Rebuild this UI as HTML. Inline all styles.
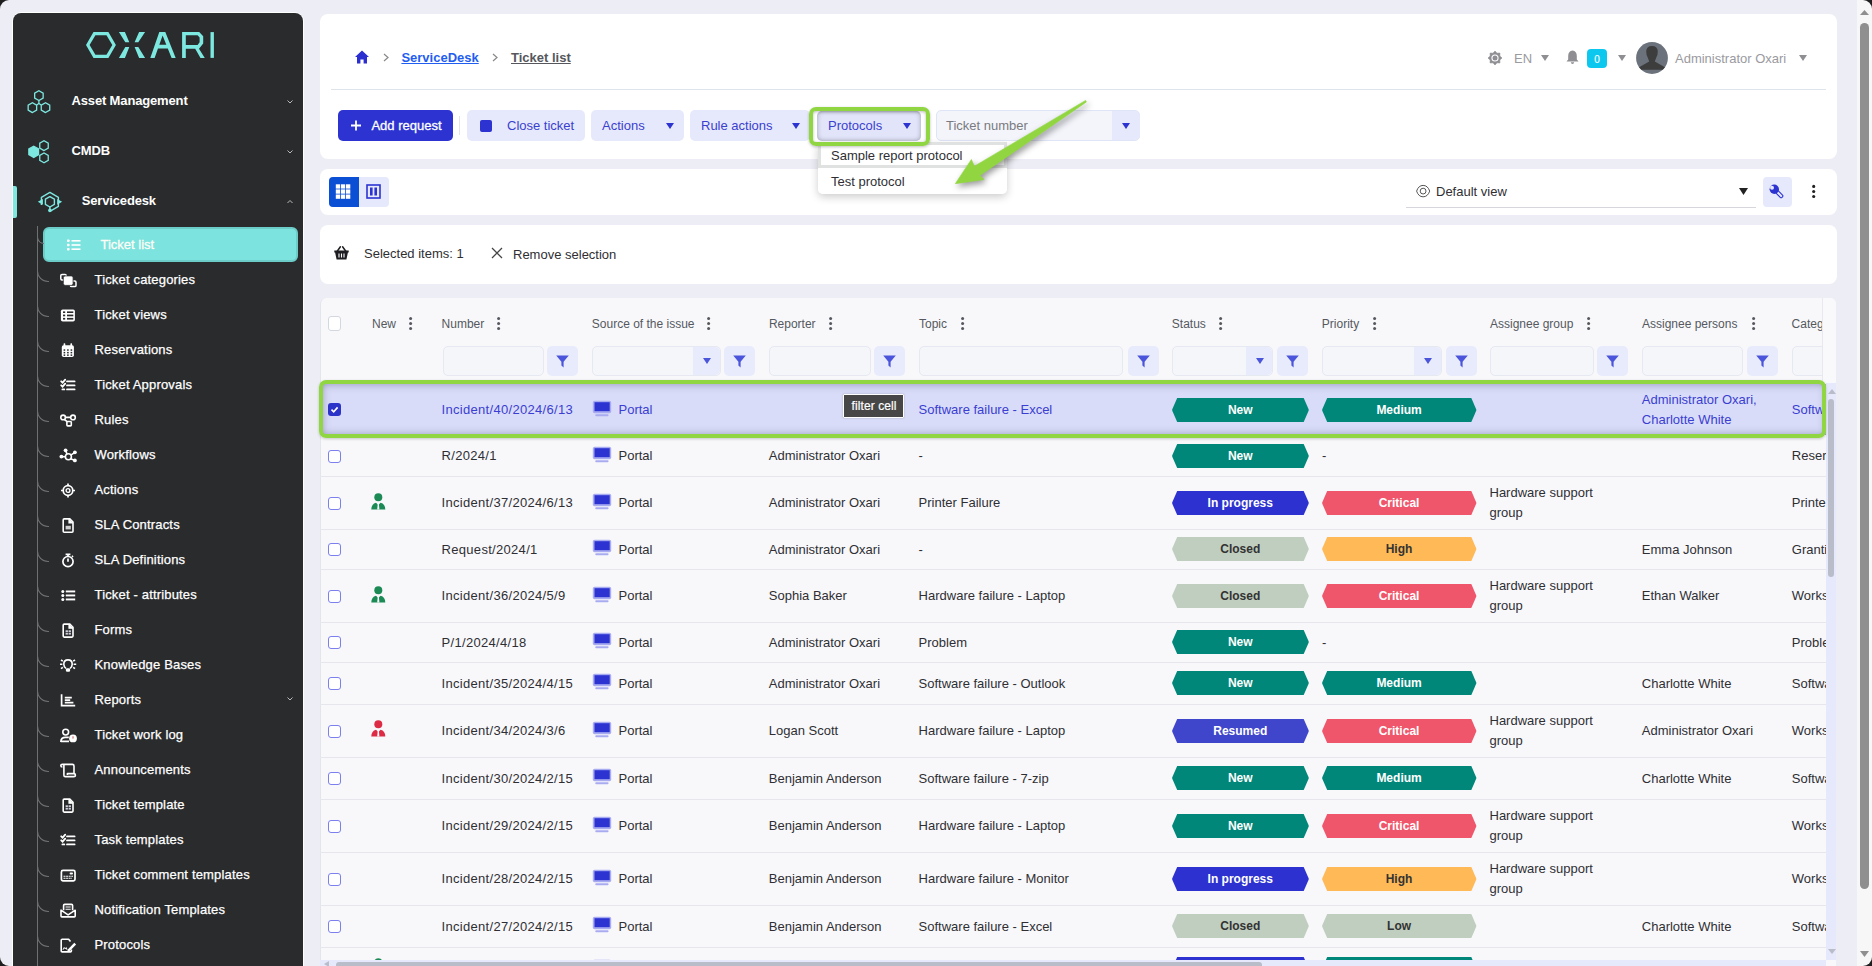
<!DOCTYPE html><html><head><meta charset="utf-8"><style>
*{box-sizing:border-box;margin:0;padding:0}
html,body{width:1872px;height:966px;overflow:hidden;background:#ededf5;font-family:"Liberation Sans",sans-serif;font-size:13px;color:#2f2f33}
.abs{position:absolute}
.t{position:absolute;white-space:nowrap;line-height:1}
svg{position:absolute;overflow:visible}
</style></head><body><div style="position:relative;width:1872px;height:966px;overflow:hidden"><div class="abs" style="left:13px;top:13px;width:290px;height:1000px;background:#2a2b2d;border-radius:8px;box-shadow:0 0 0 1px rgba(255,255,255,.9)"></div>
<svg style="left:0px;top:0px;" width="300" height="70" viewBox="0 0 300 70"><g fill="#7de8e0">
<path fill-rule="evenodd" d="M86 45 L93.5 32.1 L108.4 32.1 L115.9 45 L108.4 57.9 L93.5 57.9 Z M89.6 45 L95.4 35.3 L106.5 35.3 L112.3 45 L106.5 54.7 L95.4 54.7 Z"/>
<path d="M118.9 32.1 L124.9 32.1 L129.3 42.2 L125.3 42.2 Z M125.3 46.9 L129.3 46.9 L124.9 57.9 L118.9 57.9 Z"/>
<path d="M139.1 32.1 L145.1 32.1 L138.3 42.2 L134.6 42.2 Z M134.6 46.9 L138.3 46.9 L145.1 57.9 L139.1 57.9 Z"/>
<path d="M150.3 57.9 L159.3 32.1 L165.3 32.1 L175.7 57.9 L171.6 57.9 L162.6 35.6 L154.6 57.9 Z M156.6 44.8 H169.6 V48.6 H156.6 Z"/>
<path fill-rule="evenodd" d="M182.1 32.1 H199.2 L203.2 36.2 V43.6 L199 48.8 L204.8 57.9 H200.5 L195.2 48.8 H185.8 V57.9 H182.1 Z M185.8 35.3 H197.6 L199.6 37.6 V42.3 L197.6 45.1 H185.8 Z"/>
<rect x="210.5" y="32.1" width="3.4" height="25.8"/>
</g></svg>
<svg style="left:26px;top:89px;" width="26" height="26" viewBox="0 0 26 26"><g fill="none" stroke="#7de8e0" stroke-width="1.3">
<polygon points="17.80,6.60 15.35,10.84 10.45,10.84 8.00,6.60 10.45,2.36 15.35,2.36" transform="rotate(90 12.9 6.6)"/>
<polygon points="11.30,18.70 8.85,22.94 3.95,22.94 1.50,18.70 3.95,14.46 8.85,14.46" transform="rotate(90 6.4 18.7)"/>
<polygon points="24.40,18.70 21.95,22.94 17.05,22.94 14.60,18.70 17.05,14.46 21.95,14.46" transform="rotate(90 19.5 18.7)"/>
<path d="M12.9 11.5 V14.5 M12.9 14.5 L10.6 16 M12.9 14.5 L15.2 16"/>
</g></svg>
<div class="t" style="left:71.5px;top:94.20px;font-size:13px;color:#ffffff;font-weight:700;letter-spacing:-0.15px">Asset Management</div>
<svg style="left:286px;top:99px;" width="8" height="6" viewBox="0 0 8 6"><path d="M1.5 1.5 L4 4 L6.5 1.5" fill="none" stroke="#bbb" stroke-width="1"/></svg>
<svg style="left:27px;top:139px;" width="26" height="26" viewBox="0 0 26 26"><g stroke="#7de8e0" stroke-width="1.3">
<polygon fill="#7de8e0" points="12.30,12.80 9.50,17.65 3.90,17.65 1.10,12.80 3.90,7.95 9.50,7.95" transform="rotate(90 6.7 12.8)"/>
<polygon fill="none" points="21.90,6.70 19.45,10.94 14.55,10.94 12.10,6.70 14.55,2.46 19.45,2.46" transform="rotate(90 17 6.7)"/>
<polygon fill="none" points="21.90,18.90 19.45,23.14 14.55,23.14 12.10,18.90 14.55,14.66 19.45,14.66" transform="rotate(90 17 18.9)"/>
</g></svg>
<div class="t" style="left:71.5px;top:144.30px;font-size:13px;color:#ffffff;font-weight:700;letter-spacing:-0.15px">CMDB</div>
<svg style="left:286px;top:149px;" width="8" height="6" viewBox="0 0 8 6"><path d="M1.5 1.5 L4 4 L6.5 1.5" fill="none" stroke="#bbb" stroke-width="1"/></svg>
<div class="abs" style="left:13px;top:186px;width:4px;height:32px;background:#7de8e0;border-radius:0 2px 2px 0"></div>
<svg style="left:37px;top:191px;" width="26" height="22" viewBox="0 0 26 22"><g fill="none" stroke="#7de8e0" stroke-width="1.4" stroke-linejoin="round"><path d="M4.4 14 V6.3 L12.9 1.4 L21.4 6.3 V15.4 L12.9 20.3"/><polygon points="12.9,5.6 17.4,8.2 17.4,13.4 12.9,16 8.4,13.4 8.4,8.2"/><path d="M12.9 16 V19"/></g><path d="M0.8 10.8 L5.9 8.1 V13.7 Z M25.1 10.8 L20.2 8.1 V13.7 Z" fill="#7de8e0"/><circle cx="12.9" cy="19.4" r="1.8" fill="#7de8e0"/></svg>
<div class="t" style="left:81.7px;top:194.00px;font-size:13px;color:#ffffff;font-weight:700;letter-spacing:-0.15px">Servicedesk</div>
<svg style="left:286px;top:199px;" width="8" height="6" viewBox="0 0 8 6"><path d="M1.5 4 L4 1.5 L6.5 4" fill="none" stroke="#bbb" stroke-width="1"/></svg>
<div class="abs" style="left:37px;top:227px;width:1px;height:760px;background:#6f7073"></div>
<div class="abs" style="left:43px;top:227px;width:255px;height:35px;background:#7de3de;border:2px solid #6ccdc8;border-radius:6px"></div>
<div class="abs" style="left:37px;top:226px;width:7px;height:18px;border-left:1px solid #6f7073;border-bottom:1px solid #6f7073;border-bottom-left-radius:10px"></div>
<svg style="left:67px;top:239px;" width="14" height="12" viewBox="0 0 14 12"><g fill="#fff"><rect x="0" y="0.5" width="2.6" height="2.6" rx="0.8"/><rect x="0" y="4.7" width="2.6" height="2.6" rx="0.8"/><rect x="0" y="8.9" width="2.6" height="2.6" rx="0.8"/><rect x="4.5" y="1" width="9" height="1.6"/><rect x="4.5" y="5.2" width="9" height="1.6"/><rect x="4.5" y="9.4" width="9" height="1.6"/></g></svg>
<div class="t" style="left:100.5px;top:237.80px;font-size:13px;color:#fdfdf6;font-weight:400;-webkit-text-stroke:0.3px #fdfdf6">Ticket list</div>
<div class="abs" style="left:37px;top:269.5px;width:12px;height:12.5px;border-left:1px solid #6f7073;border-bottom:1px solid #6f7073;border-bottom-left-radius:11px"></div>
<svg style="left:60px;top:271.5px;" width="17" height="17" viewBox="0 0 17 17"><rect x="0.8" y="2.4" width="5.4" height="5.6" rx="1.2" fill="none" stroke="#ffffff" stroke-width="1.5"/><rect x="10.4" y="9" width="5.6" height="5.6" rx="1.2" fill="none" stroke="#ffffff" stroke-width="1.5"/><rect x="3.3" y="3.9" width="9.8" height="9.5" rx="1.8" fill="#ffffff" stroke="#2a2b2d" stroke-width="0.8"/></svg>
<div class="t" style="left:94.5px;top:272.70px;font-size:13px;color:#ffffff;font-weight:400;-webkit-text-stroke:0.25px #fff;letter-spacing:0.17px">Ticket categories</div>
<div class="abs" style="left:37px;top:304.5px;width:12px;height:12.5px;border-left:1px solid #6f7073;border-bottom:1px solid #6f7073;border-bottom-left-radius:11px"></div>
<svg style="left:60px;top:306.5px;" width="17" height="17" viewBox="0 0 17 17"><rect x="0.9" y="2.5" width="14" height="12.1" rx="1.8" fill="#ffffff"/><g fill="#2a2b2d"><rect x="3" y="4.4" width="2.2" height="1.6"/><rect x="3" y="7.6" width="2.2" height="1.7"/><rect x="3" y="10.9" width="2.2" height="1.7"/><rect x="7" y="4.4" width="6.3" height="1.6"/><rect x="7" y="7.6" width="6.3" height="1.7"/><rect x="7" y="10.9" width="6.3" height="1.7"/></g></svg>
<div class="t" style="left:94.5px;top:307.70px;font-size:13px;color:#ffffff;font-weight:400;-webkit-text-stroke:0.25px #fff;letter-spacing:0.17px">Ticket views</div>
<div class="abs" style="left:37px;top:339.5px;width:12px;height:12.5px;border-left:1px solid #6f7073;border-bottom:1px solid #6f7073;border-bottom-left-radius:11px"></div>
<svg style="left:60px;top:341.5px;" width="17" height="17" viewBox="0 0 17 17"><rect x="3.6" y="1.3" width="1.7" height="3" rx="0.6" fill="#ffffff"/><rect x="10.4" y="1.3" width="1.7" height="3" rx="0.6" fill="#ffffff"/><rect x="1.8" y="3.2" width="12.1" height="11.9" rx="1.8" fill="#ffffff"/><g fill="#2a2b2d"><rect x="3.6" y="7.3" width="1.6" height="1.5"/><rect x="7.1" y="7.3" width="1.6" height="1.5"/><rect x="10.6" y="7.3" width="1.6" height="1.5"/><rect x="3.6" y="9.9" width="1.6" height="1.5"/><rect x="7.1" y="9.9" width="1.6" height="1.5"/><rect x="10.6" y="9.9" width="1.6" height="1.5"/><rect x="3.6" y="12.4" width="1.6" height="1.5"/><rect x="7.1" y="12.4" width="1.6" height="1.5"/><rect x="10.6" y="12.4" width="1.6" height="1.5"/></g></svg>
<div class="t" style="left:94.5px;top:342.70px;font-size:13px;color:#ffffff;font-weight:400;-webkit-text-stroke:0.25px #fff;letter-spacing:0.17px">Reservations</div>
<div class="abs" style="left:37px;top:374.5px;width:12px;height:12.5px;border-left:1px solid #6f7073;border-bottom:1px solid #6f7073;border-bottom-left-radius:11px"></div>
<svg style="left:60px;top:376.5px;" width="17" height="17" viewBox="0 0 17 17"><g stroke="#ffffff" stroke-width="1.8" fill="none" stroke-linecap="round"><path d="M1.2 4.3 L2.6 5.6 L5.2 2.6"/><path d="M1.2 8.3 L2.6 9.6 L5.2 6.6"/><path d="M7 4.4 H14.6 M7 8.4 H14.6 M7 12.4 H14.6 M2.4 12.4 H4.3"/></g></svg>
<div class="t" style="left:94.5px;top:377.70px;font-size:13px;color:#ffffff;font-weight:400;-webkit-text-stroke:0.25px #fff;letter-spacing:0.17px">Ticket Approvals</div>
<div class="abs" style="left:37px;top:409.5px;width:12px;height:12.5px;border-left:1px solid #6f7073;border-bottom:1px solid #6f7073;border-bottom-left-radius:11px"></div>
<svg style="left:60px;top:411.5px;" width="17" height="17" viewBox="0 0 17 17"><g stroke="#ffffff" stroke-width="1.6" fill="none"><circle cx="3.1" cy="5.4" r="2.3"/><circle cx="13" cy="5.4" r="2.3"/><rect x="6.9" y="9.5" width="4.4" height="4.4" rx="0.8"/><path d="M5.4 5.4 H10.7 M4.3 7.4 L7.4 9.9"/></g></svg>
<div class="t" style="left:94.5px;top:412.70px;font-size:13px;color:#ffffff;font-weight:400;-webkit-text-stroke:0.25px #fff;letter-spacing:0.17px">Rules</div>
<div class="abs" style="left:37px;top:444.5px;width:12px;height:12.5px;border-left:1px solid #6f7073;border-bottom:1px solid #6f7073;border-bottom-left-radius:11px"></div>
<svg style="left:60px;top:446.5px;" width="17" height="17" viewBox="0 0 17 17"><g stroke="#ffffff" stroke-width="1.6" fill="none"><circle cx="8.4" cy="9.8" r="3"/><path d="M5.6 3.4 L7 7 M14.9 5.3 L10.8 8.1 M1.2 9.6 L5.4 9.8 M14.9 13.4 L10.6 11.8"/></g><g fill="#ffffff"><circle cx="5.6" cy="3.3" r="1.9"/><circle cx="14.9" cy="5.3" r="1.9"/><circle cx="1.4" cy="9.6" r="1.9"/><circle cx="14.9" cy="13.4" r="1.9"/></g></svg>
<div class="t" style="left:94.5px;top:447.70px;font-size:13px;color:#ffffff;font-weight:400;-webkit-text-stroke:0.25px #fff;letter-spacing:0.17px">Workflows</div>
<div class="abs" style="left:37px;top:479.5px;width:12px;height:12.5px;border-left:1px solid #6f7073;border-bottom:1px solid #6f7073;border-bottom-left-radius:11px"></div>
<svg style="left:60px;top:481.5px;" width="17" height="17" viewBox="0 0 17 17"><g stroke="#ffffff" fill="none"><circle cx="8" cy="8.5" r="4.8" stroke-width="1.7"/><circle cx="8" cy="8.5" r="1.9" stroke-width="1.4"/><path d="M8 1.5 V3.6 M8 13.4 V15.5 M1 8.5 H3.1 M12.9 8.5 H15" stroke-width="1.7"/></g></svg>
<div class="t" style="left:94.5px;top:482.70px;font-size:13px;color:#ffffff;font-weight:400;-webkit-text-stroke:0.25px #fff;letter-spacing:0.17px">Actions</div>
<div class="abs" style="left:37px;top:514.5px;width:12px;height:12.5px;border-left:1px solid #6f7073;border-bottom:1px solid #6f7073;border-bottom-left-radius:11px"></div>
<svg style="left:60px;top:516.5px;" width="17" height="17" viewBox="0 0 17 17"><path d="M4.2 1.9 H9.8 L13 5.1 V14.2 Q13 15.2 12 15.2 H4.2 Q3.2 15.2 3.2 14.2 V2.9 Q3.2 1.9 4.2 1.9 Z" fill="none" stroke="#ffffff" stroke-width="1.6"/><path d="M9 2 V6 H13" fill="#ffffff" stroke="#ffffff" stroke-width="1.2"/><rect x="5.6" y="8.8" width="5.2" height="3.6" fill="#cfcfcf"/></svg>
<div class="t" style="left:94.5px;top:517.70px;font-size:13px;color:#ffffff;font-weight:400;-webkit-text-stroke:0.25px #fff;letter-spacing:0.17px">SLA Contracts</div>
<div class="abs" style="left:37px;top:549.5px;width:12px;height:12.5px;border-left:1px solid #6f7073;border-bottom:1px solid #6f7073;border-bottom-left-radius:11px"></div>
<svg style="left:60px;top:551.5px;" width="17" height="17" viewBox="0 0 17 17"><g stroke="#ffffff" fill="none" stroke-width="1.7"><circle cx="8" cy="9.6" r="5.1"/><path d="M8 9.8 V6.6 M5.6 2.3 H10.4 M8 2.3 V4.4 M12 4.8 L13 3.8"/></g></svg>
<div class="t" style="left:94.5px;top:552.70px;font-size:13px;color:#ffffff;font-weight:400;-webkit-text-stroke:0.25px #fff;letter-spacing:0.17px">SLA Definitions</div>
<div class="abs" style="left:37px;top:584.5px;width:12px;height:12.5px;border-left:1px solid #6f7073;border-bottom:1px solid #6f7073;border-bottom-left-radius:11px"></div>
<svg style="left:60px;top:586.5px;" width="17" height="17" viewBox="0 0 17 17"><g fill="#ffffff"><circle cx="2.8" cy="4.4" r="1.5"/><circle cx="2.8" cy="8.4" r="1.5"/><circle cx="2.8" cy="12.4" r="1.5"/><rect x="5.8" y="3.5" width="9.4" height="1.9"/><rect x="5.8" y="7.5" width="9.4" height="1.9"/><rect x="5.8" y="11.5" width="9.4" height="1.9"/></g></svg>
<div class="t" style="left:94.5px;top:587.70px;font-size:13px;color:#ffffff;font-weight:400;-webkit-text-stroke:0.25px #fff;letter-spacing:0.17px">Ticket - attributes</div>
<div class="abs" style="left:37px;top:619.5px;width:12px;height:12.5px;border-left:1px solid #6f7073;border-bottom:1px solid #6f7073;border-bottom-left-radius:11px"></div>
<svg style="left:60px;top:621.5px;" width="17" height="17" viewBox="0 0 17 17"><path d="M4.2 2.1 H9.8 L13 5.3 V14.1 Q13 15.1 12 15.1 H4.2 Q3.2 15.1 3.2 14.1 V3.1 Q3.2 2.1 4.2 2.1 Z" fill="none" stroke="#ffffff" stroke-width="1.6"/><path d="M9 2.2 V6.2 H13" fill="#ffffff" stroke="#ffffff" stroke-width="1.2"/><g fill="#d0d0e0"><rect x="5.6" y="8.3" width="2.3" height="1.8"/><rect x="8.6" y="8.3" width="2.3" height="1.8"/><rect x="5.6" y="10.8" width="2.3" height="1.8"/><rect x="8.6" y="10.8" width="2.3" height="1.8"/></g></svg>
<div class="t" style="left:94.5px;top:622.70px;font-size:13px;color:#ffffff;font-weight:400;-webkit-text-stroke:0.25px #fff;letter-spacing:0.17px">Forms</div>
<div class="abs" style="left:37px;top:654.5px;width:12px;height:12.5px;border-left:1px solid #6f7073;border-bottom:1px solid #6f7073;border-bottom-left-radius:11px"></div>
<svg style="left:60px;top:656.5px;" width="17" height="17" viewBox="0 0 17 17"><g stroke="#ffffff" fill="none" stroke-width="1.6"><path d="M6 11.5 Q3.8 9.6 3.8 7.2 Q3.8 2.9 8 2.9 Q12.2 2.9 12.2 7.2 Q12.2 9.6 10 11.5"/><path d="M0 7.2 H2.4 M13.6 7.2 H16.2 M1 3 L2.8 4.2 M15 3 L13.2 4.2 M1 11.6 L2.8 10.3 M15 11.6 L13.2 10.3"/></g><rect x="5.9" y="11.2" width="4.2" height="3.6" rx="1.2" fill="#ffffff"/></svg>
<div class="t" style="left:94.5px;top:657.70px;font-size:13px;color:#ffffff;font-weight:400;-webkit-text-stroke:0.25px #fff;letter-spacing:0.17px">Knowledge Bases</div>
<div class="abs" style="left:37px;top:689.5px;width:12px;height:12.5px;border-left:1px solid #6f7073;border-bottom:1px solid #6f7073;border-bottom-left-radius:11px"></div>
<svg style="left:60px;top:691.5px;" width="17" height="17" viewBox="0 0 17 17"><g stroke="#ffffff" stroke-width="1.7" fill="none"><path d="M1.6 2.2 V13.7 H15.2"/><path d="M4.8 5.6 H11.8 M4.8 8.1 H10.2 M4.8 10.6 H13.4"/></g></svg>
<div class="t" style="left:94.5px;top:692.70px;font-size:13px;color:#ffffff;font-weight:400;-webkit-text-stroke:0.25px #fff;letter-spacing:0.17px">Reports</div>
<div class="abs" style="left:37px;top:724.5px;width:12px;height:12.5px;border-left:1px solid #6f7073;border-bottom:1px solid #6f7073;border-bottom-left-radius:11px"></div>
<svg style="left:60px;top:726.5px;" width="17" height="17" viewBox="0 0 17 17"><g stroke="#ffffff" stroke-width="1.6" fill="none"><circle cx="5.7" cy="5.1" r="2.9"/><path d="M0.8 15 Q0.8 10.4 5.6 10.4 H8.8 M0.8 14.4 H9"/></g><circle cx="13" cy="11.4" r="3.9" fill="#ffffff"/><path d="M13 9.3 V11.6" stroke="#b44" stroke-width="0.9"/></svg>
<div class="t" style="left:94.5px;top:727.70px;font-size:13px;color:#ffffff;font-weight:400;-webkit-text-stroke:0.25px #fff;letter-spacing:0.17px">Ticket work log</div>
<div class="abs" style="left:37px;top:759.5px;width:12px;height:12.5px;border-left:1px solid #6f7073;border-bottom:1px solid #6f7073;border-bottom-left-radius:11px"></div>
<svg style="left:60px;top:761.5px;" width="17" height="17" viewBox="0 0 17 17"><g stroke="#ffffff" stroke-width="1.6" fill="none" stroke-linejoin="round"><path d="M2.4 5 Q0.8 5 0.8 3.6 Q0.8 2.4 2.4 2.4 H12.4 Q14 2.4 14 4 V11.8"/><path d="M3.9 3 V13.2 Q3.9 14.6 5.3 14.6 H13.6 Q15.4 14.6 15.4 12.9 Q15.4 11.6 13.8 11.6 H7.4 V13"/></g></svg>
<div class="t" style="left:94.5px;top:762.70px;font-size:13px;color:#ffffff;font-weight:400;-webkit-text-stroke:0.25px #fff;letter-spacing:0.17px">Announcements</div>
<div class="abs" style="left:37px;top:794.5px;width:12px;height:12.5px;border-left:1px solid #6f7073;border-bottom:1px solid #6f7073;border-bottom-left-radius:11px"></div>
<svg style="left:60px;top:796.5px;" width="17" height="17" viewBox="0 0 17 17"><path d="M4.2 2.1 H9.8 L13 5.3 V14.1 Q13 15.1 12 15.1 H4.2 Q3.2 15.1 3.2 14.1 V3.1 Q3.2 2.1 4.2 2.1 Z" fill="none" stroke="#ffffff" stroke-width="1.6"/><path d="M9 2.2 V6.2 H13" fill="#ffffff" stroke="#ffffff" stroke-width="1.2"/><g fill="#d0d0e0"><rect x="5.6" y="8.3" width="2.3" height="1.8"/><rect x="8.6" y="8.3" width="2.3" height="1.8"/><rect x="5.6" y="10.8" width="2.3" height="1.8"/><rect x="8.6" y="10.8" width="2.3" height="1.8"/></g></svg>
<div class="t" style="left:94.5px;top:797.70px;font-size:13px;color:#ffffff;font-weight:400;-webkit-text-stroke:0.25px #fff;letter-spacing:0.17px">Ticket template</div>
<div class="abs" style="left:37px;top:829.5px;width:12px;height:12.5px;border-left:1px solid #6f7073;border-bottom:1px solid #6f7073;border-bottom-left-radius:11px"></div>
<svg style="left:60px;top:831.5px;" width="17" height="17" viewBox="0 0 17 17"><g stroke="#ffffff" stroke-width="1.8" fill="none" stroke-linecap="round"><path d="M1.2 4.3 L2.6 5.6 L5.2 2.6"/><path d="M1.2 8.3 L2.6 9.6 L5.2 6.6"/><path d="M7 4.4 H14.6 M7 8.4 H14.6 M7 12.4 H14.6 M2.4 12.4 H4.3"/></g></svg>
<div class="t" style="left:94.5px;top:832.70px;font-size:13px;color:#ffffff;font-weight:400;-webkit-text-stroke:0.25px #fff;letter-spacing:0.17px">Task templates</div>
<div class="abs" style="left:37px;top:864.5px;width:12px;height:12.5px;border-left:1px solid #6f7073;border-bottom:1px solid #6f7073;border-bottom-left-radius:11px"></div>
<svg style="left:60px;top:866.5px;" width="17" height="17" viewBox="0 0 17 17"><rect x="1.4" y="3.3" width="13.6" height="10.5" rx="1.6" fill="none" stroke="#ffffff" stroke-width="1.7"/><rect x="9.6" y="5.6" width="3.4" height="1.9" rx="0.9" fill="#ffffff"/><path d="M3.5 9.3 H13 M3.5 11.3 H12" stroke="#ffffff" stroke-width="1.1" stroke-dasharray="2 0.6"/></svg>
<div class="t" style="left:94.5px;top:867.70px;font-size:13px;color:#ffffff;font-weight:400;-webkit-text-stroke:0.25px #fff;letter-spacing:0.17px">Ticket comment templates</div>
<div class="abs" style="left:37px;top:899.5px;width:12px;height:12.5px;border-left:1px solid #6f7073;border-bottom:1px solid #6f7073;border-bottom-left-radius:11px"></div>
<svg style="left:60px;top:901.5px;" width="17" height="17" viewBox="0 0 17 17"><g stroke="#ffffff" stroke-width="1.6" fill="none" stroke-linejoin="round"><path d="M3.6 8.2 V3.5 Q3.6 2.4 4.7 2.4 H11.5 Q12.6 2.4 12.6 3.5 V8.2"/><path d="M1 8.2 V14 Q1 14.9 1.9 14.9 H14.3 Q15.2 14.9 15.2 14 V8.2 L8.1 12.9 Z"/></g><path d="M5.5 5 H10.7 M5.5 7.2 H10.7" stroke="#ffffff" stroke-width="1.1"/></svg>
<div class="t" style="left:94.5px;top:902.70px;font-size:13px;color:#ffffff;font-weight:400;-webkit-text-stroke:0.25px #fff;letter-spacing:0.17px">Notification Templates</div>
<div class="abs" style="left:37px;top:934.5px;width:12px;height:12.5px;border-left:1px solid #6f7073;border-bottom:1px solid #6f7073;border-bottom-left-radius:11px"></div>
<svg style="left:60px;top:936.5px;" width="17" height="17" viewBox="0 0 17 17"><g stroke="#ffffff" stroke-width="1.6" fill="none" stroke-linejoin="round"><path d="M10.5 4.6 L8.6 2.2 H2.2 Q1.2 2.2 1.2 3.2 V13.9 Q1.2 14.9 2.2 14.9 H10.4 Q11.4 14.9 11.4 13.9 V12.6"/></g><path d="M3 12.8 L4.2 10.5 L5 11.8 L6.3 10.6 L7 12.8" stroke="#ffffff" stroke-width="1" fill="none"/><path d="M7.6 12.8 L14.3 5.8 L16.1 7.6 L9.3 14.6 L7.3 14.9 Z" fill="#ffffff"/></svg>
<div class="t" style="left:94.5px;top:937.70px;font-size:13px;color:#ffffff;font-weight:400;-webkit-text-stroke:0.25px #fff;letter-spacing:0.17px">Protocols</div>
<svg style="left:286px;top:696px;" width="8" height="6" viewBox="0 0 8 6"><path d="M1.5 1.5 L4 4 L6.5 1.5" fill="none" stroke="#bbb" stroke-width="1"/></svg>
<div class="abs" style="left:320px;top:14px;width:1517px;height:145px;background:#fff;border-radius:8px"></div>
<div class="abs" style="left:320px;top:169px;width:1517px;height:46px;background:#fff;border-radius:8px"></div>
<div class="abs" style="left:320px;top:225px;width:1517px;height:59px;background:#fff;border-radius:8px"></div>
<svg style="left:355px;top:50px;" width="14" height="14" viewBox="0 0 14 14"><path d="M7 0.5 L14 7 L12 7 L12 13.5 L8.6 13.5 L8.6 9.5 L5.4 9.5 L5.4 13.5 L2 13.5 L2 7 L0 7 Z" fill="#2c2fd0"/></svg>
<svg style="left:383px;top:53px;" width="6" height="9" viewBox="0 0 6 9"><path d="M1 1 L5 4.5 L1 8" fill="none" stroke="#888" stroke-width="1.2"/></svg>
<div class="t" style="left:401.4px;top:51.10px;font-size:13px;color:#1f5ef0;font-weight:700;text-decoration:underline;text-underline-offset:1px">ServiceDesk</div>
<svg style="left:492px;top:53px;" width="6" height="9" viewBox="0 0 6 9"><path d="M1 1 L5 4.5 L1 8" fill="none" stroke="#888" stroke-width="1.2"/></svg>
<div class="t" style="left:511px;top:51.10px;font-size:13px;color:#55575c;font-weight:700;text-decoration:underline;text-underline-offset:1px">Ticket list</div>
<div class="abs" style="left:331px;top:89px;width:1495px;height:1px;background:#dfe3ea"></div>
<svg style="left:1487.5px;top:50.5px;" width="14" height="14" viewBox="0 0 14 14"><polygon points="7.00,0.00 8.99,2.20 11.95,2.05 11.80,5.01 14.00,7.00 11.80,8.99 11.95,11.95 8.99,11.80 7.00,14.00 5.01,11.80 2.05,11.95 2.20,8.99 0.00,7.00 2.20,5.01 2.05,2.05 5.01,2.20" fill="#8e8e93" stroke="#8e8e93" stroke-width="0.6" stroke-linejoin="round"/><circle cx="7" cy="7" r="3.6" fill="#fff"/><circle cx="7" cy="7" r="2.5" fill="#8e8e93"/></svg>
<div class="t" style="left:1514px;top:51.60px;font-size:13px;color:#9a9aa0;font-weight:400;">EN</div>
<svg style="left:1541px;top:55px;" width="8" height="6" viewBox="0 0 8 6"><path d="M0 0 H8 L4 6 Z" fill="#8e8e93"/></svg>
<svg style="left:1565.5px;top:50px;" width="13" height="14" viewBox="0 0 13 14"><path d="M6.5 0.5 Q10.8 1 10.8 6 L10.8 9.5 L12.5 11.5 L0.5 11.5 L2.2 9.5 L2.2 6 Q2.2 1 6.5 0.5 Z M4.8 12.3 H8.2 Q8 14 6.5 14 Q5 14 4.8 12.3Z" fill="#8e8e93"/></svg>
<div class="abs" style="left:1587px;top:49px;width:20px;height:19px;background:#0dc8ee;border-radius:4px"></div>
<div class="t" style="left:1594.3px;top:54.73px;font-size:10px;color:#fff;font-weight:400;-webkit-text-stroke:0.15px #fff">0</div>
<svg style="left:1618px;top:55px;" width="8" height="6" viewBox="0 0 8 6"><path d="M0 0 H8 L4 6 Z" fill="#8e8e93"/></svg>
<svg style="left:1636px;top:42px;" width="32" height="32" viewBox="0 0 32 32"><defs><clipPath id="av"><circle cx="16" cy="16" r="15.9"/></clipPath></defs><circle cx="16" cy="16" r="15.9" fill="#6b727b"/><g clip-path="url(#av)" fill="#3d3d3e"><path d="M10.2 9.5 Q10.2 3.9 16 3.9 Q21.8 3.9 21.8 9.5 Q21.8 12.8 20.3 15.5 L18.8 19.5 L28.9 25.2 V27.8 H3.1 V25.2 L13.2 19.5 L11.7 15.5 Q10.2 12.8 10.2 9.5 Z"/></g></svg>
<div class="t" style="left:1675px;top:51.60px;font-size:13px;color:#9a9aa0;font-weight:400;">Administrator Oxari</div>
<svg style="left:1799px;top:55px;" width="8" height="6" viewBox="0 0 8 6"><path d="M0 0 H8 L4 6 Z" fill="#8e8e93"/></svg>
<div class="abs" style="left:338px;top:110px;width:115px;height:31px;background:#2c33d1;border-radius:5px"></div>
<svg style="left:351px;top:120px;" width="10" height="11" viewBox="0 0 10 11"><path d="M5 0.5 V10.5 M0 5.5 H10" stroke="#fff" stroke-width="1.8"/></svg>
<div class="t" style="left:371.4px;top:118.90px;font-size:13px;color:#fff;font-weight:400;-webkit-text-stroke:0.3px #fff">Add request</div>
<div class="abs" style="left:459px;top:116px;width:1px;height:19px;background:#e3e3e8"></div>
<div class="abs" style="left:467px;top:110px;width:118px;height:31px;background:#e6e9fb;border-radius:5px"></div>
<div class="abs" style="left:480px;top:120px;width:12px;height:12px;background:#2c33d1;border-radius:2px"></div>
<div class="t" style="left:507px;top:118.90px;font-size:13px;color:#3a3fd0;font-weight:400;">Close ticket</div>
<div class="abs" style="left:591px;top:110px;width:93px;height:31px;background:#e6e9fb;border-radius:5px"></div>
<div class="t" style="left:602px;top:118.90px;font-size:13px;color:#3a3fd0;font-weight:400;">Actions</div>
<svg style="left:666px;top:123px;" width="8" height="6" viewBox="0 0 8 6"><path d="M0 0 H8 L4 6 Z" fill="#2c33d1"/></svg>
<div class="abs" style="left:690px;top:110px;width:120px;height:31px;background:#e6e9fb;border-radius:5px"></div>
<div class="t" style="left:701px;top:118.90px;font-size:13px;color:#3a3fd0;font-weight:400;">Rule actions</div>
<svg style="left:792px;top:123px;" width="8" height="6" viewBox="0 0 8 6"><path d="M0 0 H8 L4 6 Z" fill="#2c33d1"/></svg>
<div class="abs" style="left:817px;top:110.5px;width:104px;height:30px;background:#e2e5fa;border-radius:5px;box-shadow:inset 0 0 5px rgba(0,0,0,.3)"></div>
<div class="t" style="left:828px;top:119.00px;font-size:13px;color:#3a3fd0;font-weight:400;">Protocols</div>
<svg style="left:903px;top:123px;" width="8" height="6" viewBox="0 0 8 6"><path d="M0 0 H8 L4 6 Z" fill="#2c33d1"/></svg>
<div class="abs" style="left:935.5px;top:110px;width:204.5px;height:31px;background:#f3f5fb;border:1px solid #dfe5f7;border-radius:5px"></div>
<div class="abs" style="left:1112px;top:111px;width:28px;height:29px;background:#e6e9fb;border-radius:0 5px 5px 0"></div>
<div class="t" style="left:946px;top:118.90px;font-size:13px;color:#7a7a80;font-weight:400;">Ticket number</div>
<svg style="left:1122px;top:123px;" width="8" height="6" viewBox="0 0 8 6"><path d="M0 0 H8 L4 6 Z" fill="#2c33d1"/></svg>
<div class="abs" style="left:329px;top:177px;width:30px;height:30px;background:#0b4fd5;border-radius:4px 0 0 4px"></div>
<svg style="left:336px;top:184px;" width="16" height="16" viewBox="0 0 16 16"><g fill="#fff"><rect x="-0.2" y="0.3" width="4.3" height="4.3"/><rect x="-0.2" y="5.3999999999999995" width="4.3" height="4.3"/><rect x="-0.2" y="10.5" width="4.3" height="4.3"/><rect x="4.8999999999999995" y="0.3" width="4.3" height="4.3"/><rect x="4.8999999999999995" y="5.3999999999999995" width="4.3" height="4.3"/><rect x="4.8999999999999995" y="10.5" width="4.3" height="4.3"/><rect x="10.0" y="0.3" width="4.3" height="4.3"/><rect x="10.0" y="5.3999999999999995" width="4.3" height="4.3"/><rect x="10.0" y="10.5" width="4.3" height="4.3"/></g></svg>
<div class="abs" style="left:359px;top:177px;width:30px;height:30px;background:#e6e9fb;border-radius:0 4px 4px 0"></div>
<svg style="left:366px;top:184px;" width="15" height="15" viewBox="0 0 15 15"><rect x="1" y="1" width="13" height="13" fill="none" stroke="#2c33d1" stroke-width="1.6"/><rect x="4" y="3.5" width="2.6" height="8" fill="#2c33d1"/><rect x="8.4" y="3.5" width="2.6" height="8" fill="#2c33d1"/></svg>
<div class="abs" style="left:1406px;top:207px;width:350px;height:1px;background:#d6d6dc"></div>
<svg style="left:1416px;top:185px;" width="15" height="12" viewBox="0 0 15 12"><g fill="none" stroke="#555" stroke-width="1"><path d="M0.6 6.1 Q2.5 0.4 7.1 0.4 Q11.7 0.4 13.7 6.1 Q11.7 11.8 7.1 11.8 Q2.5 11.8 0.6 6.1 Z"/><circle cx="7.1" cy="6.1" r="2.9"/></g></svg>
<div class="t" style="left:1436px;top:184.80px;font-size:13px;color:#2f2f33;font-weight:400;">Default view</div>
<svg style="left:1739px;top:188px;" width="9" height="7" viewBox="0 0 9 7"><path d="M0 0 H9 L4.5 7 Z" fill="#222"/></svg>
<div class="abs" style="left:1763px;top:177px;width:29px;height:30px;background:#e6e9fb;border-radius:4px"></div>
<svg style="left:1768px;top:183px;" width="17" height="17" viewBox="0 0 17 17"><g transform="rotate(-45 6.3 6.3)"><rect x="4.8" y="8" width="3.2" height="9.4" rx="1.2" fill="#e6e9fb" stroke="#2c33d1" stroke-width="1.1"/></g><circle cx="6.3" cy="6.3" r="4.7" fill="#2c33d1"/><circle cx="4" cy="4.8" r="2" fill="#e6e9fb"/><path d="M2.3 3.4 L0 1 L0 6 Z" fill="#e6e9fb"/></svg>
<svg style="left:1811.5px;top:185px;" width="4" height="14" viewBox="0 0 4 14"><g fill="#222"><circle cx="1.7" cy="1.4" r="1.55"/><circle cx="1.7" cy="6.5" r="1.55"/><circle cx="1.7" cy="11.5" r="1.55"/></g></svg>
<svg style="left:334px;top:246px;" width="15" height="14" viewBox="0 0 15 14"><path d="M3.2 5.2 L6.4 0.8 M11.8 5.2 L8.6 0.8" fill="none" stroke="#1e1e22" stroke-width="1.5" stroke-linecap="round"/><path d="M0.3 4.6 H14.7 V6.6 H13.9 L12.4 13.4 H2.6 L1.1 6.6 H0.3 Z" fill="#1e1e22"/><path d="M5 7.6 V11.6 M7.5 7.6 V11.6 M10 7.6 V11.6" stroke="#fff" stroke-width="1.1"/></svg>
<div class="t" style="left:364px;top:247.00px;font-size:13px;color:#2f2f33;font-weight:400;">Selected items: 1</div>
<svg style="left:491px;top:247px;" width="12" height="12" viewBox="0 0 12 12"><path d="M1 1 L11 11 M11 1 L1 11" stroke="#444" stroke-width="1.3"/></svg>
<div class="t" style="left:513px;top:247.50px;font-size:13px;color:#2f2f33;font-weight:400;">Remove selection</div>
<div class="abs" style="left:320px;top:298px;width:1516px;height:700px;background:#f8f8fb;border-radius:6px 6px 0 0;border-left:1px solid #e4e5ec"></div>
<div class="abs" style="left:320px;top:298px;width:1506px;height:662px;overflow:hidden">
<div class="abs" style="left:8px;top:18px;width:13px;height:15px;background:#fff;border:1px solid #d3d8e0;border-radius:3px"></div>
<div class="t" style="left:52px;top:19.84px;font-size:12px;color:#55585e;font-weight:400;">New</div>
<svg style="left:88.89999999999998px;top:19px;" width="4" height="13" viewBox="0 0 4 13"><g fill="#55585e"><circle cx="1.6" cy="1.6" r="1.5"/><circle cx="1.6" cy="6.6" r="1.5"/><circle cx="1.6" cy="11.6" r="1.5"/></g></svg>
<div class="t" style="left:121.60000000000002px;top:19.84px;font-size:12px;color:#55585e;font-weight:400;">Number</div>
<svg style="left:177.39999999999998px;top:19px;" width="4" height="13" viewBox="0 0 4 13"><g fill="#55585e"><circle cx="1.6" cy="1.6" r="1.5"/><circle cx="1.6" cy="6.6" r="1.5"/><circle cx="1.6" cy="11.6" r="1.5"/></g></svg>
<div class="t" style="left:271.79999999999995px;top:19.84px;font-size:12px;color:#55585e;font-weight:400;">Source of the issue</div>
<svg style="left:386.79999999999995px;top:19px;" width="4" height="13" viewBox="0 0 4 13"><g fill="#55585e"><circle cx="1.6" cy="1.6" r="1.5"/><circle cx="1.6" cy="6.6" r="1.5"/><circle cx="1.6" cy="11.6" r="1.5"/></g></svg>
<div class="t" style="left:448.9px;top:19.84px;font-size:12px;color:#55585e;font-weight:400;">Reporter</div>
<svg style="left:508.69999999999993px;top:19px;" width="4" height="13" viewBox="0 0 4 13"><g fill="#55585e"><circle cx="1.6" cy="1.6" r="1.5"/><circle cx="1.6" cy="6.6" r="1.5"/><circle cx="1.6" cy="11.6" r="1.5"/></g></svg>
<div class="t" style="left:599px;top:19.84px;font-size:12px;color:#55585e;font-weight:400;">Topic</div>
<svg style="left:640.9px;top:19px;" width="4" height="13" viewBox="0 0 4 13"><g fill="#55585e"><circle cx="1.6" cy="1.6" r="1.5"/><circle cx="1.6" cy="6.6" r="1.5"/><circle cx="1.6" cy="11.6" r="1.5"/></g></svg>
<div class="t" style="left:851.8px;top:19.84px;font-size:12px;color:#55585e;font-weight:400;">Status</div>
<svg style="left:898.9000000000001px;top:19px;" width="4" height="13" viewBox="0 0 4 13"><g fill="#55585e"><circle cx="1.6" cy="1.6" r="1.5"/><circle cx="1.6" cy="6.6" r="1.5"/><circle cx="1.6" cy="11.6" r="1.5"/></g></svg>
<div class="t" style="left:1001.8px;top:19.84px;font-size:12px;color:#55585e;font-weight:400;">Priority</div>
<svg style="left:1052.8000000000002px;top:19px;" width="4" height="13" viewBox="0 0 4 13"><g fill="#55585e"><circle cx="1.6" cy="1.6" r="1.5"/><circle cx="1.6" cy="6.6" r="1.5"/><circle cx="1.6" cy="11.6" r="1.5"/></g></svg>
<div class="t" style="left:1170px;top:19.84px;font-size:12px;color:#55585e;font-weight:400;">Assignee group</div>
<svg style="left:1266.7px;top:19px;" width="4" height="13" viewBox="0 0 4 13"><g fill="#55585e"><circle cx="1.6" cy="1.6" r="1.5"/><circle cx="1.6" cy="6.6" r="1.5"/><circle cx="1.6" cy="11.6" r="1.5"/></g></svg>
<div class="t" style="left:1322px;top:19.84px;font-size:12px;color:#55585e;font-weight:400;">Assignee persons</div>
<svg style="left:1431.8000000000002px;top:19px;" width="4" height="13" viewBox="0 0 4 13"><g fill="#55585e"><circle cx="1.6" cy="1.6" r="1.5"/><circle cx="1.6" cy="6.6" r="1.5"/><circle cx="1.6" cy="11.6" r="1.5"/></g></svg>
<div class="t" style="left:1471.6px;top:19.84px;font-size:12px;color:#55585e;font-weight:400;">Category</div>
<div class="abs" style="left:122.5px;top:48px;width:101.0px;height:30px;background:#f5f6fa;border:1px solid #e6e9f2;border-radius:5px"></div>
<svg style="left:227px;top:48px;" width="31" height="30" viewBox="0 0 31 30"><rect x="0" y="0" width="31" height="30" rx="5" fill="#e8ebfb"/><path d="M9.2 9.5 H21.8 L16.6 15.8 V21.5 L14.4 19.6 V15.8 Z" fill="#4b55dc"/></svg>
<div class="abs" style="left:272.29999999999995px;top:48px;width:128.5px;height:30px;background:#f5f6fa;border:1px solid #e6e9f2;border-radius:5px"></div>
<div class="abs" style="left:373px;top:49px;width:26.799999999999955px;height:28px;background:#e8ebfb;border-radius:0 5px 5px 0"></div>
<svg style="left:382.9px;top:60px;" width="8" height="6" viewBox="0 0 8 6"><path d="M0 0 H8 L4 6 Z" fill="#4b55dc"/></svg>
<svg style="left:404.4px;top:48px;" width="31" height="30" viewBox="0 0 31 30"><rect x="0" y="0" width="31" height="30" rx="5" fill="#e8ebfb"/><path d="M9.2 9.5 H21.8 L16.6 15.8 V21.5 L14.4 19.6 V15.8 Z" fill="#4b55dc"/></svg>
<div class="abs" style="left:449.4px;top:48px;width:101.20000000000005px;height:30px;background:#f5f6fa;border:1px solid #e6e9f2;border-radius:5px"></div>
<svg style="left:554.2px;top:48px;" width="31" height="30" viewBox="0 0 31 30"><rect x="0" y="0" width="31" height="30" rx="5" fill="#e8ebfb"/><path d="M9.2 9.5 H21.8 L16.6 15.8 V21.5 L14.4 19.6 V15.8 Z" fill="#4b55dc"/></svg>
<div class="abs" style="left:599.2px;top:48px;width:204.20000000000005px;height:30px;background:#f5f6fa;border:1px solid #e6e9f2;border-radius:5px"></div>
<svg style="left:807.5999999999999px;top:48px;" width="31" height="30" viewBox="0 0 31 30"><rect x="0" y="0" width="31" height="30" rx="5" fill="#e8ebfb"/><path d="M9.2 9.5 H21.8 L16.6 15.8 V21.5 L14.4 19.6 V15.8 Z" fill="#4b55dc"/></svg>
<div class="abs" style="left:852.4000000000001px;top:48px;width:101.0px;height:30px;background:#f5f6fa;border:1px solid #e6e9f2;border-radius:5px"></div>
<div class="abs" style="left:926px;top:49px;width:26.40000000000009px;height:28px;background:#e8ebfb;border-radius:0 5px 5px 0"></div>
<svg style="left:935.7px;top:60px;" width="8" height="6" viewBox="0 0 8 6"><path d="M0 0 H8 L4 6 Z" fill="#4b55dc"/></svg>
<svg style="left:957.2px;top:48px;" width="31" height="30" viewBox="0 0 31 30"><rect x="0" y="0" width="31" height="30" rx="5" fill="#e8ebfb"/><path d="M9.2 9.5 H21.8 L16.6 15.8 V21.5 L14.4 19.6 V15.8 Z" fill="#4b55dc"/></svg>
<div class="abs" style="left:1002.4000000000001px;top:48px;width:119.29999999999995px;height:30px;background:#f5f6fa;border:1px solid #e6e9f2;border-radius:5px"></div>
<div class="abs" style="left:1094.4px;top:49px;width:26.299999999999955px;height:28px;background:#e8ebfb;border-radius:0 5px 5px 0"></div>
<svg style="left:1104.0500000000002px;top:60px;" width="8" height="6" viewBox="0 0 8 6"><path d="M0 0 H8 L4 6 Z" fill="#4b55dc"/></svg>
<svg style="left:1125.5px;top:48px;" width="31" height="30" viewBox="0 0 31 30"><rect x="0" y="0" width="31" height="30" rx="5" fill="#e8ebfb"/><path d="M9.2 9.5 H21.8 L16.6 15.8 V21.5 L14.4 19.6 V15.8 Z" fill="#4b55dc"/></svg>
<div class="abs" style="left:1170.4px;top:48px;width:103.19999999999982px;height:30px;background:#f5f6fa;border:1px solid #e6e9f2;border-radius:5px"></div>
<svg style="left:1277.1px;top:48px;" width="31" height="30" viewBox="0 0 31 30"><rect x="0" y="0" width="31" height="30" rx="5" fill="#e8ebfb"/><path d="M9.2 9.5 H21.8 L16.6 15.8 V21.5 L14.4 19.6 V15.8 Z" fill="#4b55dc"/></svg>
<div class="abs" style="left:1322.2px;top:48px;width:101.20000000000005px;height:30px;background:#f5f6fa;border:1px solid #e6e9f2;border-radius:5px"></div>
<svg style="left:1427.2px;top:48px;" width="31" height="30" viewBox="0 0 31 30"><rect x="0" y="0" width="31" height="30" rx="5" fill="#e8ebfb"/><path d="M9.2 9.5 H21.8 L16.6 15.8 V21.5 L14.4 19.6 V15.8 Z" fill="#4b55dc"/></svg>
<div class="abs" style="left:1472.3px;top:48px;width:107.70000000000005px;height:30px;background:#f5f6fa;border:1px solid #e6e9f2;border-radius:5px"></div>
<div class="abs" style="left:2px;top:85.5px;width:1504px;height:51.5px;background:#d9dcf8;box-shadow:inset 0 0 8px rgba(50,50,100,.45)"></div>
<div class="abs" style="left:8px;top:105.25px;width:13px;height:13px;background:#2c33c8;border-radius:3px"></div>
<svg style="left:10px;top:107.25px;" width="9" height="9" viewBox="0 0 9 9"><path d="M1.5 4.6 L3.7 6.8 L7.6 2.4" fill="none" stroke="#fff" stroke-width="1.6"/></svg>
<div class="t" style="left:121.60000000000002px;top:104.95px;font-size:13px;color:#3a3ed2;font-weight:400;letter-spacing:0.3px">Incident/40/2024/6/13</div>
<svg style="left:271.6px;top:101.75px;" width="20" height="17" viewBox="0 0 20 17"><rect x="0.8" y="0.8" width="18.4" height="12.4" rx="1.8" fill="#a9abf1"/><rect x="2.5" y="2.2" width="15.2" height="9" fill="#2c33d1"/><rect x="3.3" y="14.2" width="13.2" height="2" rx="0.8" fill="#a9abf1"/></svg>
<div class="t" style="left:298.5px;top:104.95px;font-size:13px;color:#3a3ed2;font-weight:400;">Portal</div>
<div class="t" style="left:598.6px;top:104.95px;font-size:13px;color:#3a3ed2;font-weight:400;">Software failure - Excel</div>
<svg style="left:851.8px;top:99.75px;" width="136.9000000000001" height="24" viewBox="0 0 136.9000000000001 24"><path d="M5.2 0 H131.7000000000001 L136.60000000000008 11.3 Q136.9000000000001 12 136.60000000000008 12.7 L131.7000000000001 24 H5.2 L0.3 12.7 Q0 12 0.3 11.3 Z" fill="#00877a"/></svg>
<div class="t" style="left:851.8px;top:99.75px;width:136.9000000000001px;height:24px;line-height:24px;text-align:center;font-size:12px;font-weight:700;color:#fff">New</div>
<svg style="left:1001.8px;top:99.75px;" width="154.5" height="24" viewBox="0 0 154.5 24"><path d="M5.2 0 H149.3 L154.2 11.3 Q154.5 12 154.2 12.7 L149.3 24 H5.2 L0.3 12.7 Q0 12 0.3 11.3 Z" fill="#00877a"/></svg>
<div class="t" style="left:1001.8px;top:99.75px;width:154.5px;height:24px;line-height:24px;text-align:center;font-size:12px;font-weight:700;color:#fff">Medium</div>
<div class="t" style="left:1321.8px;top:94.55px;font-size:13px;color:#3a3ed2;font-weight:400;">Administrator Oxari,</div>
<div class="t" style="left:1321.8px;top:114.55px;font-size:13px;color:#3a3ed2;font-weight:400;">Charlotte White</div>
<div class="t" style="left:1471.8px;top:104.95px;font-size:13px;color:#3a3ed2;font-weight:400;">Software failure</div>
<div class="abs" style="left:0px;top:178.10000000000002px;width:1506px;height:1px;background:#e6e7ec"></div>
<div class="abs" style="left:8px;top:151.8px;width:13px;height:13px;background:#fff;border:1.5px solid #7c80ef;border-radius:3px"></div>
<div class="t" style="left:121.60000000000002px;top:151.00px;font-size:13px;color:#2f2f33;font-weight:400;letter-spacing:0.3px">R/2024/1</div>
<svg style="left:271.6px;top:147.8px;" width="20" height="17" viewBox="0 0 20 17"><rect x="0.8" y="0.8" width="18.4" height="12.4" rx="1.8" fill="#a9abf1"/><rect x="2.5" y="2.2" width="15.2" height="9" fill="#2c33d1"/><rect x="3.3" y="14.2" width="13.2" height="2" rx="0.8" fill="#a9abf1"/></svg>
<div class="t" style="left:298.5px;top:151.00px;font-size:13px;color:#2f2f33;font-weight:400;">Portal</div>
<div class="t" style="left:448.79999999999995px;top:151.00px;font-size:13px;color:#2f2f33;font-weight:400;">Administrator Oxari</div>
<div class="t" style="left:598.6px;top:151.00px;font-size:13px;color:#2f2f33;font-weight:400;">-</div>
<svg style="left:851.8px;top:145.8px;" width="136.9000000000001" height="24" viewBox="0 0 136.9000000000001 24"><path d="M5.2 0 H131.7000000000001 L136.60000000000008 11.3 Q136.9000000000001 12 136.60000000000008 12.7 L131.7000000000001 24 H5.2 L0.3 12.7 Q0 12 0.3 11.3 Z" fill="#00877a"/></svg>
<div class="t" style="left:851.8px;top:145.8px;width:136.9000000000001px;height:24px;line-height:24px;text-align:center;font-size:12px;font-weight:700;color:#fff">New</div>
<div class="t" style="left:1002px;top:151.00px;font-size:13px;color:#2f2f33;font-weight:400;">-</div>
<div class="t" style="left:1471.8px;top:151.00px;font-size:13px;color:#2f2f33;font-weight:400;">Reservation</div>
<div class="abs" style="left:0px;top:230.89999999999998px;width:1506px;height:1px;background:#e6e7ec"></div>
<div class="abs" style="left:8px;top:199.0px;width:13px;height:13px;background:#fff;border:1.5px solid #7c80ef;border-radius:3px"></div>
<svg style="left:51.30000000000001px;top:194.5px;" width="15" height="17" viewBox="0 0 15 17"><circle cx="7.3" cy="4.2" r="4" fill="#1b8a55"/><path d="M0.3 16.5 Q0.5 10.6 5 9.7 L7.3 12 L9.6 9.7 Q14.1 10.6 14.3 16.5 Z" fill="#1b8a55"/><path d="M6.6 10.6 H8 L7.9 11.3 L8.4 16.5 H6.2 L6.7 11.3 Z" fill="#fff"/></svg>
<div class="t" style="left:121.60000000000002px;top:198.20px;font-size:13px;color:#2f2f33;font-weight:400;letter-spacing:0.3px">Incident/37/2024/6/13</div>
<svg style="left:271.6px;top:195.0px;" width="20" height="17" viewBox="0 0 20 17"><rect x="0.8" y="0.8" width="18.4" height="12.4" rx="1.8" fill="#a9abf1"/><rect x="2.5" y="2.2" width="15.2" height="9" fill="#2c33d1"/><rect x="3.3" y="14.2" width="13.2" height="2" rx="0.8" fill="#a9abf1"/></svg>
<div class="t" style="left:298.5px;top:198.20px;font-size:13px;color:#2f2f33;font-weight:400;">Portal</div>
<div class="t" style="left:448.79999999999995px;top:198.20px;font-size:13px;color:#2f2f33;font-weight:400;">Administrator Oxari</div>
<div class="t" style="left:598.6px;top:198.20px;font-size:13px;color:#2f2f33;font-weight:400;">Printer Failure</div>
<svg style="left:851.8px;top:193.0px;" width="136.9000000000001" height="24" viewBox="0 0 136.9000000000001 24"><path d="M5.2 0 H131.7000000000001 L136.60000000000008 11.3 Q136.9000000000001 12 136.60000000000008 12.7 L131.7000000000001 24 H5.2 L0.3 12.7 Q0 12 0.3 11.3 Z" fill="#2c31d0"/></svg>
<div class="t" style="left:851.8px;top:193.0px;width:136.9000000000001px;height:24px;line-height:24px;text-align:center;font-size:12px;font-weight:700;color:#fff">In progress</div>
<svg style="left:1001.8px;top:193.0px;" width="154.5" height="24" viewBox="0 0 154.5 24"><path d="M5.2 0 H149.3 L154.2 11.3 Q154.5 12 154.2 12.7 L149.3 24 H5.2 L0.3 12.7 Q0 12 0.3 11.3 Z" fill="#f0566b"/></svg>
<div class="t" style="left:1001.8px;top:193.0px;width:154.5px;height:24px;line-height:24px;text-align:center;font-size:12px;font-weight:700;color:#fff">Critical</div>
<div class="t" style="left:1169.5px;top:187.80px;font-size:13px;color:#2f2f33;font-weight:400;">Hardware support</div>
<div class="t" style="left:1169.5px;top:207.80px;font-size:13px;color:#2f2f33;font-weight:400;">group</div>
<div class="t" style="left:1471.8px;top:198.20px;font-size:13px;color:#2f2f33;font-weight:400;">Printer</div>
<div class="abs" style="left:0px;top:271.0px;width:1506px;height:1px;background:#e6e7ec"></div>
<div class="abs" style="left:8px;top:245.45000000000005px;width:13px;height:13px;background:#fff;border:1.5px solid #7c80ef;border-radius:3px"></div>
<div class="t" style="left:121.60000000000002px;top:244.65px;font-size:13px;color:#2f2f33;font-weight:400;letter-spacing:0.3px">Request/2024/1</div>
<svg style="left:271.6px;top:241.45000000000005px;" width="20" height="17" viewBox="0 0 20 17"><rect x="0.8" y="0.8" width="18.4" height="12.4" rx="1.8" fill="#a9abf1"/><rect x="2.5" y="2.2" width="15.2" height="9" fill="#2c33d1"/><rect x="3.3" y="14.2" width="13.2" height="2" rx="0.8" fill="#a9abf1"/></svg>
<div class="t" style="left:298.5px;top:244.65px;font-size:13px;color:#2f2f33;font-weight:400;">Portal</div>
<div class="t" style="left:448.79999999999995px;top:244.65px;font-size:13px;color:#2f2f33;font-weight:400;">Administrator Oxari</div>
<div class="t" style="left:598.6px;top:244.65px;font-size:13px;color:#2f2f33;font-weight:400;">-</div>
<svg style="left:851.8px;top:239.45000000000005px;" width="136.9000000000001" height="24" viewBox="0 0 136.9000000000001 24"><path d="M5.2 0 H131.7000000000001 L136.60000000000008 11.3 Q136.9000000000001 12 136.60000000000008 12.7 L131.7000000000001 24 H5.2 L0.3 12.7 Q0 12 0.3 11.3 Z" fill="#c0cebf"/></svg>
<div class="t" style="left:851.8px;top:239.45000000000005px;width:136.9000000000001px;height:24px;line-height:24px;text-align:center;font-size:12px;font-weight:700;color:#333">Closed</div>
<svg style="left:1001.8px;top:239.45000000000005px;" width="154.5" height="24" viewBox="0 0 154.5 24"><path d="M5.2 0 H149.3 L154.2 11.3 Q154.5 12 154.2 12.7 L149.3 24 H5.2 L0.3 12.7 Q0 12 0.3 11.3 Z" fill="#ffb957"/></svg>
<div class="t" style="left:1001.8px;top:239.45000000000005px;width:154.5px;height:24px;line-height:24px;text-align:center;font-size:12px;font-weight:700;color:#333">High</div>
<div class="t" style="left:1321.8px;top:244.65px;font-size:13px;color:#2f2f33;font-weight:400;">Emma Johnson</div>
<div class="t" style="left:1471.8px;top:244.65px;font-size:13px;color:#2f2f33;font-weight:400;">Granting</div>
<div class="abs" style="left:0px;top:324.1px;width:1506px;height:1px;background:#e6e7ec"></div>
<div class="abs" style="left:8px;top:292.04999999999995px;width:13px;height:13px;background:#fff;border:1.5px solid #7c80ef;border-radius:3px"></div>
<svg style="left:51.30000000000001px;top:287.54999999999995px;" width="15" height="17" viewBox="0 0 15 17"><circle cx="7.3" cy="4.2" r="4" fill="#1b8a55"/><path d="M0.3 16.5 Q0.5 10.6 5 9.7 L7.3 12 L9.6 9.7 Q14.1 10.6 14.3 16.5 Z" fill="#1b8a55"/><path d="M6.6 10.6 H8 L7.9 11.3 L8.4 16.5 H6.2 L6.7 11.3 Z" fill="#fff"/></svg>
<div class="t" style="left:121.60000000000002px;top:291.25px;font-size:13px;color:#2f2f33;font-weight:400;letter-spacing:0.3px">Incident/36/2024/5/9</div>
<svg style="left:271.6px;top:288.04999999999995px;" width="20" height="17" viewBox="0 0 20 17"><rect x="0.8" y="0.8" width="18.4" height="12.4" rx="1.8" fill="#a9abf1"/><rect x="2.5" y="2.2" width="15.2" height="9" fill="#2c33d1"/><rect x="3.3" y="14.2" width="13.2" height="2" rx="0.8" fill="#a9abf1"/></svg>
<div class="t" style="left:298.5px;top:291.25px;font-size:13px;color:#2f2f33;font-weight:400;">Portal</div>
<div class="t" style="left:448.79999999999995px;top:291.25px;font-size:13px;color:#2f2f33;font-weight:400;">Sophia Baker</div>
<div class="t" style="left:598.6px;top:291.25px;font-size:13px;color:#2f2f33;font-weight:400;">Hardware failure - Laptop</div>
<svg style="left:851.8px;top:286.04999999999995px;" width="136.9000000000001" height="24" viewBox="0 0 136.9000000000001 24"><path d="M5.2 0 H131.7000000000001 L136.60000000000008 11.3 Q136.9000000000001 12 136.60000000000008 12.7 L131.7000000000001 24 H5.2 L0.3 12.7 Q0 12 0.3 11.3 Z" fill="#c0cebf"/></svg>
<div class="t" style="left:851.8px;top:286.04999999999995px;width:136.9000000000001px;height:24px;line-height:24px;text-align:center;font-size:12px;font-weight:700;color:#333">Closed</div>
<svg style="left:1001.8px;top:286.04999999999995px;" width="154.5" height="24" viewBox="0 0 154.5 24"><path d="M5.2 0 H149.3 L154.2 11.3 Q154.5 12 154.2 12.7 L149.3 24 H5.2 L0.3 12.7 Q0 12 0.3 11.3 Z" fill="#f0566b"/></svg>
<div class="t" style="left:1001.8px;top:286.04999999999995px;width:154.5px;height:24px;line-height:24px;text-align:center;font-size:12px;font-weight:700;color:#fff">Critical</div>
<div class="t" style="left:1169.5px;top:280.85px;font-size:13px;color:#2f2f33;font-weight:400;">Hardware support</div>
<div class="t" style="left:1169.5px;top:300.85px;font-size:13px;color:#2f2f33;font-weight:400;">group</div>
<div class="t" style="left:1321.8px;top:291.25px;font-size:13px;color:#2f2f33;font-weight:400;">Ethan Walker</div>
<div class="t" style="left:1471.8px;top:291.25px;font-size:13px;color:#2f2f33;font-weight:400;">Workstation</div>
<div class="abs" style="left:0px;top:363.79999999999995px;width:1506px;height:1px;background:#e6e7ec"></div>
<div class="abs" style="left:8px;top:338.45000000000005px;width:13px;height:13px;background:#fff;border:1.5px solid #7c80ef;border-radius:3px"></div>
<div class="t" style="left:121.60000000000002px;top:337.65px;font-size:13px;color:#2f2f33;font-weight:400;letter-spacing:0.3px">P/1/2024/4/18</div>
<svg style="left:271.6px;top:334.45000000000005px;" width="20" height="17" viewBox="0 0 20 17"><rect x="0.8" y="0.8" width="18.4" height="12.4" rx="1.8" fill="#a9abf1"/><rect x="2.5" y="2.2" width="15.2" height="9" fill="#2c33d1"/><rect x="3.3" y="14.2" width="13.2" height="2" rx="0.8" fill="#a9abf1"/></svg>
<div class="t" style="left:298.5px;top:337.65px;font-size:13px;color:#2f2f33;font-weight:400;">Portal</div>
<div class="t" style="left:448.79999999999995px;top:337.65px;font-size:13px;color:#2f2f33;font-weight:400;">Administrator Oxari</div>
<div class="t" style="left:598.6px;top:337.65px;font-size:13px;color:#2f2f33;font-weight:400;">Problem</div>
<svg style="left:851.8px;top:332.45000000000005px;" width="136.9000000000001" height="24" viewBox="0 0 136.9000000000001 24"><path d="M5.2 0 H131.7000000000001 L136.60000000000008 11.3 Q136.9000000000001 12 136.60000000000008 12.7 L131.7000000000001 24 H5.2 L0.3 12.7 Q0 12 0.3 11.3 Z" fill="#00877a"/></svg>
<div class="t" style="left:851.8px;top:332.45000000000005px;width:136.9000000000001px;height:24px;line-height:24px;text-align:center;font-size:12px;font-weight:700;color:#fff">New</div>
<div class="t" style="left:1002px;top:337.65px;font-size:13px;color:#2f2f33;font-weight:400;">-</div>
<div class="t" style="left:1471.8px;top:337.65px;font-size:13px;color:#2f2f33;font-weight:400;">Problem</div>
<div class="abs" style="left:0px;top:405.9px;width:1506px;height:1px;background:#e6e7ec"></div>
<div class="abs" style="left:8px;top:379.3499999999999px;width:13px;height:13px;background:#fff;border:1.5px solid #7c80ef;border-radius:3px"></div>
<div class="t" style="left:121.60000000000002px;top:378.55px;font-size:13px;color:#2f2f33;font-weight:400;letter-spacing:0.3px">Incident/35/2024/4/15</div>
<svg style="left:271.6px;top:375.3499999999999px;" width="20" height="17" viewBox="0 0 20 17"><rect x="0.8" y="0.8" width="18.4" height="12.4" rx="1.8" fill="#a9abf1"/><rect x="2.5" y="2.2" width="15.2" height="9" fill="#2c33d1"/><rect x="3.3" y="14.2" width="13.2" height="2" rx="0.8" fill="#a9abf1"/></svg>
<div class="t" style="left:298.5px;top:378.55px;font-size:13px;color:#2f2f33;font-weight:400;">Portal</div>
<div class="t" style="left:448.79999999999995px;top:378.55px;font-size:13px;color:#2f2f33;font-weight:400;">Administrator Oxari</div>
<div class="t" style="left:598.6px;top:378.55px;font-size:13px;color:#2f2f33;font-weight:400;">Software failure - Outlook</div>
<svg style="left:851.8px;top:373.3499999999999px;" width="136.9000000000001" height="24" viewBox="0 0 136.9000000000001 24"><path d="M5.2 0 H131.7000000000001 L136.60000000000008 11.3 Q136.9000000000001 12 136.60000000000008 12.7 L131.7000000000001 24 H5.2 L0.3 12.7 Q0 12 0.3 11.3 Z" fill="#00877a"/></svg>
<div class="t" style="left:851.8px;top:373.3499999999999px;width:136.9000000000001px;height:24px;line-height:24px;text-align:center;font-size:12px;font-weight:700;color:#fff">New</div>
<svg style="left:1001.8px;top:373.3499999999999px;" width="154.5" height="24" viewBox="0 0 154.5 24"><path d="M5.2 0 H149.3 L154.2 11.3 Q154.5 12 154.2 12.7 L149.3 24 H5.2 L0.3 12.7 Q0 12 0.3 11.3 Z" fill="#00877a"/></svg>
<div class="t" style="left:1001.8px;top:373.3499999999999px;width:154.5px;height:24px;line-height:24px;text-align:center;font-size:12px;font-weight:700;color:#fff">Medium</div>
<div class="t" style="left:1321.8px;top:378.55px;font-size:13px;color:#2f2f33;font-weight:400;">Charlotte White</div>
<div class="t" style="left:1471.8px;top:378.55px;font-size:13px;color:#2f2f33;font-weight:400;">Software</div>
<div class="abs" style="left:0px;top:458.79999999999995px;width:1506px;height:1px;background:#e6e7ec"></div>
<div class="abs" style="left:8px;top:426.8499999999999px;width:13px;height:13px;background:#fff;border:1.5px solid #7c80ef;border-radius:3px"></div>
<svg style="left:51.30000000000001px;top:422.3499999999999px;" width="15" height="17" viewBox="0 0 15 17"><circle cx="7.3" cy="4.2" r="4" fill="#dd2b45"/><path d="M0.3 16.5 Q0.5 10.6 5 9.7 L7.3 12 L9.6 9.7 Q14.1 10.6 14.3 16.5 Z" fill="#dd2b45"/><path d="M6.6 10.6 H8 L7.9 11.3 L8.4 16.5 H6.2 L6.7 11.3 Z" fill="#fff"/></svg>
<div class="t" style="left:121.60000000000002px;top:426.05px;font-size:13px;color:#2f2f33;font-weight:400;letter-spacing:0.3px">Incident/34/2024/3/6</div>
<svg style="left:271.6px;top:422.8499999999999px;" width="20" height="17" viewBox="0 0 20 17"><rect x="0.8" y="0.8" width="18.4" height="12.4" rx="1.8" fill="#a9abf1"/><rect x="2.5" y="2.2" width="15.2" height="9" fill="#2c33d1"/><rect x="3.3" y="14.2" width="13.2" height="2" rx="0.8" fill="#a9abf1"/></svg>
<div class="t" style="left:298.5px;top:426.05px;font-size:13px;color:#2f2f33;font-weight:400;">Portal</div>
<div class="t" style="left:448.79999999999995px;top:426.05px;font-size:13px;color:#2f2f33;font-weight:400;">Logan Scott</div>
<div class="t" style="left:598.6px;top:426.05px;font-size:13px;color:#2f2f33;font-weight:400;">Hardware failure - Laptop</div>
<svg style="left:851.8px;top:420.8499999999999px;" width="136.9000000000001" height="24" viewBox="0 0 136.9000000000001 24"><path d="M5.2 0 H131.7000000000001 L136.60000000000008 11.3 Q136.9000000000001 12 136.60000000000008 12.7 L131.7000000000001 24 H5.2 L0.3 12.7 Q0 12 0.3 11.3 Z" fill="#4046cb"/></svg>
<div class="t" style="left:851.8px;top:420.8499999999999px;width:136.9000000000001px;height:24px;line-height:24px;text-align:center;font-size:12px;font-weight:700;color:#fff">Resumed</div>
<svg style="left:1001.8px;top:420.8499999999999px;" width="154.5" height="24" viewBox="0 0 154.5 24"><path d="M5.2 0 H149.3 L154.2 11.3 Q154.5 12 154.2 12.7 L149.3 24 H5.2 L0.3 12.7 Q0 12 0.3 11.3 Z" fill="#f0566b"/></svg>
<div class="t" style="left:1001.8px;top:420.8499999999999px;width:154.5px;height:24px;line-height:24px;text-align:center;font-size:12px;font-weight:700;color:#fff">Critical</div>
<div class="t" style="left:1169.5px;top:415.65px;font-size:13px;color:#2f2f33;font-weight:400;">Hardware support</div>
<div class="t" style="left:1169.5px;top:435.65px;font-size:13px;color:#2f2f33;font-weight:400;">group</div>
<div class="t" style="left:1321.8px;top:426.05px;font-size:13px;color:#2f2f33;font-weight:400;">Administrator Oxari</div>
<div class="t" style="left:1471.8px;top:426.05px;font-size:13px;color:#2f2f33;font-weight:400;">Workstation</div>
<div class="abs" style="left:0px;top:500.9px;width:1506px;height:1px;background:#e6e7ec"></div>
<div class="abs" style="left:8px;top:474.3499999999999px;width:13px;height:13px;background:#fff;border:1.5px solid #7c80ef;border-radius:3px"></div>
<div class="t" style="left:121.60000000000002px;top:473.55px;font-size:13px;color:#2f2f33;font-weight:400;letter-spacing:0.3px">Incident/30/2024/2/15</div>
<svg style="left:271.6px;top:470.3499999999999px;" width="20" height="17" viewBox="0 0 20 17"><rect x="0.8" y="0.8" width="18.4" height="12.4" rx="1.8" fill="#a9abf1"/><rect x="2.5" y="2.2" width="15.2" height="9" fill="#2c33d1"/><rect x="3.3" y="14.2" width="13.2" height="2" rx="0.8" fill="#a9abf1"/></svg>
<div class="t" style="left:298.5px;top:473.55px;font-size:13px;color:#2f2f33;font-weight:400;">Portal</div>
<div class="t" style="left:448.79999999999995px;top:473.55px;font-size:13px;color:#2f2f33;font-weight:400;">Benjamin Anderson</div>
<div class="t" style="left:598.6px;top:473.55px;font-size:13px;color:#2f2f33;font-weight:400;">Software failure - 7-zip</div>
<svg style="left:851.8px;top:468.3499999999999px;" width="136.9000000000001" height="24" viewBox="0 0 136.9000000000001 24"><path d="M5.2 0 H131.7000000000001 L136.60000000000008 11.3 Q136.9000000000001 12 136.60000000000008 12.7 L131.7000000000001 24 H5.2 L0.3 12.7 Q0 12 0.3 11.3 Z" fill="#00877a"/></svg>
<div class="t" style="left:851.8px;top:468.3499999999999px;width:136.9000000000001px;height:24px;line-height:24px;text-align:center;font-size:12px;font-weight:700;color:#fff">New</div>
<svg style="left:1001.8px;top:468.3499999999999px;" width="154.5" height="24" viewBox="0 0 154.5 24"><path d="M5.2 0 H149.3 L154.2 11.3 Q154.5 12 154.2 12.7 L149.3 24 H5.2 L0.3 12.7 Q0 12 0.3 11.3 Z" fill="#00877a"/></svg>
<div class="t" style="left:1001.8px;top:468.3499999999999px;width:154.5px;height:24px;line-height:24px;text-align:center;font-size:12px;font-weight:700;color:#fff">Medium</div>
<div class="t" style="left:1321.8px;top:473.55px;font-size:13px;color:#2f2f33;font-weight:400;">Charlotte White</div>
<div class="t" style="left:1471.8px;top:473.55px;font-size:13px;color:#2f2f33;font-weight:400;">Software</div>
<div class="abs" style="left:0px;top:553.7px;width:1506px;height:1px;background:#e6e7ec"></div>
<div class="abs" style="left:8px;top:521.8px;width:13px;height:13px;background:#fff;border:1.5px solid #7c80ef;border-radius:3px"></div>
<div class="t" style="left:121.60000000000002px;top:521.00px;font-size:13px;color:#2f2f33;font-weight:400;letter-spacing:0.3px">Incident/29/2024/2/15</div>
<svg style="left:271.6px;top:517.8px;" width="20" height="17" viewBox="0 0 20 17"><rect x="0.8" y="0.8" width="18.4" height="12.4" rx="1.8" fill="#a9abf1"/><rect x="2.5" y="2.2" width="15.2" height="9" fill="#2c33d1"/><rect x="3.3" y="14.2" width="13.2" height="2" rx="0.8" fill="#a9abf1"/></svg>
<div class="t" style="left:298.5px;top:521.00px;font-size:13px;color:#2f2f33;font-weight:400;">Portal</div>
<div class="t" style="left:448.79999999999995px;top:521.00px;font-size:13px;color:#2f2f33;font-weight:400;">Benjamin Anderson</div>
<div class="t" style="left:598.6px;top:521.00px;font-size:13px;color:#2f2f33;font-weight:400;">Hardware failure - Laptop</div>
<svg style="left:851.8px;top:515.8px;" width="136.9000000000001" height="24" viewBox="0 0 136.9000000000001 24"><path d="M5.2 0 H131.7000000000001 L136.60000000000008 11.3 Q136.9000000000001 12 136.60000000000008 12.7 L131.7000000000001 24 H5.2 L0.3 12.7 Q0 12 0.3 11.3 Z" fill="#00877a"/></svg>
<div class="t" style="left:851.8px;top:515.8px;width:136.9000000000001px;height:24px;line-height:24px;text-align:center;font-size:12px;font-weight:700;color:#fff">New</div>
<svg style="left:1001.8px;top:515.8px;" width="154.5" height="24" viewBox="0 0 154.5 24"><path d="M5.2 0 H149.3 L154.2 11.3 Q154.5 12 154.2 12.7 L149.3 24 H5.2 L0.3 12.7 Q0 12 0.3 11.3 Z" fill="#f0566b"/></svg>
<div class="t" style="left:1001.8px;top:515.8px;width:154.5px;height:24px;line-height:24px;text-align:center;font-size:12px;font-weight:700;color:#fff">Critical</div>
<div class="t" style="left:1169.5px;top:510.60px;font-size:13px;color:#2f2f33;font-weight:400;">Hardware support</div>
<div class="t" style="left:1169.5px;top:530.60px;font-size:13px;color:#2f2f33;font-weight:400;">group</div>
<div class="t" style="left:1471.8px;top:521.00px;font-size:13px;color:#2f2f33;font-weight:400;">Workstation</div>
<div class="abs" style="left:0px;top:606.8px;width:1506px;height:1px;background:#e6e7ec"></div>
<div class="abs" style="left:8px;top:574.75px;width:13px;height:13px;background:#fff;border:1.5px solid #7c80ef;border-radius:3px"></div>
<div class="t" style="left:121.60000000000002px;top:573.95px;font-size:13px;color:#2f2f33;font-weight:400;letter-spacing:0.3px">Incident/28/2024/2/15</div>
<svg style="left:271.6px;top:570.75px;" width="20" height="17" viewBox="0 0 20 17"><rect x="0.8" y="0.8" width="18.4" height="12.4" rx="1.8" fill="#a9abf1"/><rect x="2.5" y="2.2" width="15.2" height="9" fill="#2c33d1"/><rect x="3.3" y="14.2" width="13.2" height="2" rx="0.8" fill="#a9abf1"/></svg>
<div class="t" style="left:298.5px;top:573.95px;font-size:13px;color:#2f2f33;font-weight:400;">Portal</div>
<div class="t" style="left:448.79999999999995px;top:573.95px;font-size:13px;color:#2f2f33;font-weight:400;">Benjamin Anderson</div>
<div class="t" style="left:598.6px;top:573.95px;font-size:13px;color:#2f2f33;font-weight:400;">Hardware failure - Monitor</div>
<svg style="left:851.8px;top:568.75px;" width="136.9000000000001" height="24" viewBox="0 0 136.9000000000001 24"><path d="M5.2 0 H131.7000000000001 L136.60000000000008 11.3 Q136.9000000000001 12 136.60000000000008 12.7 L131.7000000000001 24 H5.2 L0.3 12.7 Q0 12 0.3 11.3 Z" fill="#2c31d0"/></svg>
<div class="t" style="left:851.8px;top:568.75px;width:136.9000000000001px;height:24px;line-height:24px;text-align:center;font-size:12px;font-weight:700;color:#fff">In progress</div>
<svg style="left:1001.8px;top:568.75px;" width="154.5" height="24" viewBox="0 0 154.5 24"><path d="M5.2 0 H149.3 L154.2 11.3 Q154.5 12 154.2 12.7 L149.3 24 H5.2 L0.3 12.7 Q0 12 0.3 11.3 Z" fill="#ffb957"/></svg>
<div class="t" style="left:1001.8px;top:568.75px;width:154.5px;height:24px;line-height:24px;text-align:center;font-size:12px;font-weight:700;color:#333">High</div>
<div class="t" style="left:1169.5px;top:563.55px;font-size:13px;color:#2f2f33;font-weight:400;">Hardware support</div>
<div class="t" style="left:1169.5px;top:583.55px;font-size:13px;color:#2f2f33;font-weight:400;">group</div>
<div class="t" style="left:1471.8px;top:573.95px;font-size:13px;color:#2f2f33;font-weight:400;">Workstation</div>
<div class="abs" style="left:0px;top:649.1px;width:1506px;height:1px;background:#e6e7ec"></div>
<div class="abs" style="left:8px;top:622.45px;width:13px;height:13px;background:#fff;border:1.5px solid #7c80ef;border-radius:3px"></div>
<div class="t" style="left:121.60000000000002px;top:621.65px;font-size:13px;color:#2f2f33;font-weight:400;letter-spacing:0.3px">Incident/27/2024/2/15</div>
<svg style="left:271.6px;top:618.45px;" width="20" height="17" viewBox="0 0 20 17"><rect x="0.8" y="0.8" width="18.4" height="12.4" rx="1.8" fill="#a9abf1"/><rect x="2.5" y="2.2" width="15.2" height="9" fill="#2c33d1"/><rect x="3.3" y="14.2" width="13.2" height="2" rx="0.8" fill="#a9abf1"/></svg>
<div class="t" style="left:298.5px;top:621.65px;font-size:13px;color:#2f2f33;font-weight:400;">Portal</div>
<div class="t" style="left:448.79999999999995px;top:621.65px;font-size:13px;color:#2f2f33;font-weight:400;">Benjamin Anderson</div>
<div class="t" style="left:598.6px;top:621.65px;font-size:13px;color:#2f2f33;font-weight:400;">Software failure - Excel</div>
<svg style="left:851.8px;top:616.45px;" width="136.9000000000001" height="24" viewBox="0 0 136.9000000000001 24"><path d="M5.2 0 H131.7000000000001 L136.60000000000008 11.3 Q136.9000000000001 12 136.60000000000008 12.7 L131.7000000000001 24 H5.2 L0.3 12.7 Q0 12 0.3 11.3 Z" fill="#c0cebf"/></svg>
<div class="t" style="left:851.8px;top:616.45px;width:136.9000000000001px;height:24px;line-height:24px;text-align:center;font-size:12px;font-weight:700;color:#333">Closed</div>
<svg style="left:1001.8px;top:616.45px;" width="154.5" height="24" viewBox="0 0 154.5 24"><path d="M5.2 0 H149.3 L154.2 11.3 Q154.5 12 154.2 12.7 L149.3 24 H5.2 L0.3 12.7 Q0 12 0.3 11.3 Z" fill="#c0cebf"/></svg>
<div class="t" style="left:1001.8px;top:616.45px;width:154.5px;height:24px;line-height:24px;text-align:center;font-size:12px;font-weight:700;color:#333">Low</div>
<div class="t" style="left:1321.8px;top:621.65px;font-size:13px;color:#2f2f33;font-weight:400;">Charlotte White</div>
<div class="t" style="left:1471.8px;top:621.65px;font-size:13px;color:#2f2f33;font-weight:400;">Software</div>
<div class="abs" style="left:0px;top:691.5px;width:1506px;height:1px;background:#e6e7ec"></div>
<div class="abs" style="left:8px;top:664.8px;width:13px;height:13px;background:#fff;border:1.5px solid #7c80ef;border-radius:3px"></div>
<svg style="left:51.30000000000001px;top:660.3px;" width="15" height="17" viewBox="0 0 15 17"><circle cx="7.3" cy="4.2" r="4" fill="#1b8a55"/><path d="M0.3 16.5 Q0.5 10.6 5 9.7 L7.3 12 L9.6 9.7 Q14.1 10.6 14.3 16.5 Z" fill="#1b8a55"/><path d="M6.6 10.6 H8 L7.9 11.3 L8.4 16.5 H6.2 L6.7 11.3 Z" fill="#fff"/></svg>
<div class="t" style="left:121.60000000000002px;top:664.00px;font-size:13px;color:#2f2f33;font-weight:400;letter-spacing:0.3px">Incident/26/2024/2/15</div>
<svg style="left:271.6px;top:660.8px;" width="20" height="17" viewBox="0 0 20 17"><rect x="0.8" y="0.8" width="18.4" height="12.4" rx="1.8" fill="#a9abf1"/><rect x="2.5" y="2.2" width="15.2" height="9" fill="#2c33d1"/><rect x="3.3" y="14.2" width="13.2" height="2" rx="0.8" fill="#a9abf1"/></svg>
<div class="t" style="left:298.5px;top:664.00px;font-size:13px;color:#2f2f33;font-weight:400;">Portal</div>
<div class="t" style="left:448.79999999999995px;top:664.00px;font-size:13px;color:#2f2f33;font-weight:400;">Benjamin Anderson</div>
<div class="t" style="left:598.6px;top:664.00px;font-size:13px;color:#2f2f33;font-weight:400;">Hardware failure</div>
<svg style="left:851.8px;top:658.8px;" width="136.9000000000001" height="24" viewBox="0 0 136.9000000000001 24"><path d="M5.2 0 H131.7000000000001 L136.60000000000008 11.3 Q136.9000000000001 12 136.60000000000008 12.7 L131.7000000000001 24 H5.2 L0.3 12.7 Q0 12 0.3 11.3 Z" fill="#2c31d0"/></svg>
<div class="t" style="left:851.8px;top:658.8px;width:136.9000000000001px;height:24px;line-height:24px;text-align:center;font-size:12px;font-weight:700;color:#fff">In progress</div>
<svg style="left:1001.8px;top:658.8px;" width="154.5" height="24" viewBox="0 0 154.5 24"><path d="M5.2 0 H149.3 L154.2 11.3 Q154.5 12 154.2 12.7 L149.3 24 H5.2 L0.3 12.7 Q0 12 0.3 11.3 Z" fill="#00877a"/></svg>
<div class="t" style="left:1001.8px;top:658.8px;width:154.5px;height:24px;line-height:24px;text-align:center;font-size:12px;font-weight:700;color:#fff">Medium</div>
<div class="t" style="left:1471.8px;top:664.00px;font-size:13px;color:#2f2f33;font-weight:400;">Workstation</div>
</div>
<div class="abs" style="left:1821.5px;top:298px;width:14.5px;height:86px;background:#f9f9fb;border-left:1px solid #e8e8ee;border-radius:0 6px 0 0"></div>
<div class="abs" style="left:1826px;top:383px;width:10px;height:577px;background:#e6e9fb"></div>
<div class="abs" style="left:1828px;top:399px;width:6px;height:178px;background:#b9bdc9;border-radius:3px"></div>
<svg style="left:1827.5px;top:389px;" width="8" height="5" viewBox="0 0 8 5"><path d="M0 5 H8 L4 0 Z" fill="#b9bdc9"/></svg>
<svg style="left:1827.5px;top:949px;" width="8" height="5" viewBox="0 0 8 5"><path d="M0 0 H8 L4 5 Z" fill="#b9bdc9"/></svg>
<div class="abs" style="left:320px;top:960px;width:1506px;height:6px;background:#e6e9fb"></div>
<div class="abs" style="left:336px;top:962px;width:926px;height:6px;background:#b9bdc9;border-radius:3px"></div>
<svg style="left:324px;top:961px;" width="5" height="6" viewBox="0 0 5 6"><path d="M5 0 V6 L0 3 Z" fill="#b9bdc9"/></svg>
<div class="abs" style="left:319px;top:379.5px;width:1507px;height:58.5px;border:4px solid #8fd642;border-radius:7px;box-shadow:0 1px 3px rgba(0,0,0,.2)"></div>
<div class="abs" style="left:843px;top:393.5px;width:61px;height:24.5px;background:#474747;border:1.2px solid #fff;border-radius:1px;box-shadow:0 0 2px rgba(0,0,0,.25)"></div>
<div class="t" style="left:851.5px;top:399.84px;font-size:12px;color:#fff;font-weight:400;-webkit-text-stroke:0.2px #fff;letter-spacing:0.1px">filter cell</div>
<div class="abs" style="left:818px;top:143px;width:189px;height:51px;background:#fff;border-radius:0 0 5px 5px;box-shadow:0 3px 8px rgba(0,0,0,.2)"></div>
<div class="abs" style="left:818px;top:141.5px;width:189px;height:26.5px;background:#e0e2e1"></div>
<div class="abs" style="left:821px;top:145px;width:183px;height:20px;background:#fff"></div>
<div class="abs" style="left:818px;top:168px;width:189px;height:26px;background:#fff;border-radius:0 0 5px 5px"></div>
<div class="t" style="left:831px;top:148.50px;font-size:13px;color:#2f2f33;font-weight:400;">Sample report protocol</div>
<div class="t" style="left:831px;top:174.50px;font-size:13px;color:#2f2f33;font-weight:400;">Test protocol</div>
<div class="abs" style="left:809px;top:106.5px;width:120.5px;height:39.5px;border:4px solid #8fd642;border-radius:7px;box-shadow:0 1px 3px rgba(0,0,0,.25), inset 0 1px 3px rgba(0,0,0,.25)"></div>
<svg style="left:940px;top:90px;filter:drop-shadow(2px 3px 3px rgba(0,0,0,.4))" width="160" height="110" viewBox="0 0 160 110"><polygon points="145.6,10.4 146.4,11.9 39.9,85.6 44.2,89.6 15.3,93.7 31.4,69.5 34.4,76.2" fill="#91d640" stroke="#91d640" stroke-width="0.6" stroke-linejoin="round"/></svg>
<div class="abs" style="left:1857px;top:0px;width:15px;height:966px;background:#f7f7f7"></div>
<div class="abs" style="left:1860px;top:23px;width:9px;height:866px;background:#8f8f8f;border-radius:5px"></div>
<svg style="left:1860px;top:10px;" width="9" height="5" viewBox="0 0 9 5"><path d="M0 5 H9 L4.5 0 Z" fill="#8f8f8f"/></svg>
<svg style="left:1860px;top:951px;" width="9" height="6" viewBox="0 0 9 6"><path d="M0 0 H9 L4.5 6 Z" fill="#8f8f8f"/></svg>
<div class="abs" style="left:0px;top:0px;width:1872px;height:966px;border-radius:9px;box-shadow:0 0 0 12px #1e1e1e"></div></div></body></html>
